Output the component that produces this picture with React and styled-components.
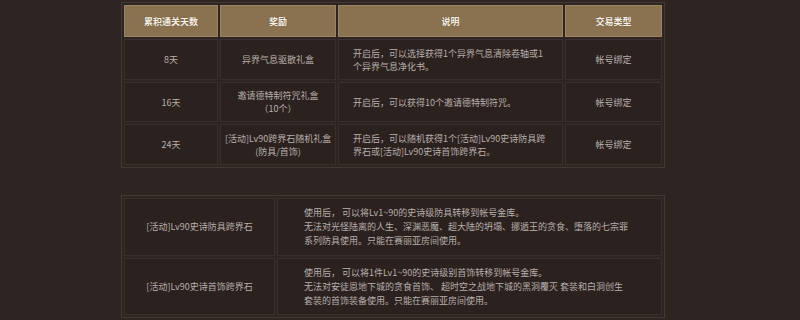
import React from 'react';
import styled, { createGlobalStyle } from 'styled-components';

const GlobalStyle = createGlobalStyle`
	html, body {
		margin: 0;
		background: #2e2422;
	}
	body {
		font-family: "Noto Sans CJK SC", "Noto Sans", sans-serif;
	}
`;

const rewards = [
	{
		days: '8天',
		reward: ['异界气息驱散礼盒'],
		desc: ['开启后，可以选择获得1个异界气息清除卷轴或1', '个异界气息净化书。'],
		trade: '帐号绑定',
		height: 41,
	},
	{
		days: '16天',
		reward: ['邀请德特制符咒礼盒', '（10个）'],
		desc: ['开启后，可以获得10个邀请德特制符咒。'],
		trade: '帐号绑定',
		height: 40,
	},
	{
		days: '24天',
		reward: ['[活动]Lv90跨界石随机礼盒', '(防具/首饰)'],
		desc: ['开启后，可以随机获得1个[活动]Lv90史诗防具跨', '界石或[活动]Lv90史诗首饰跨界石。'],
		trade: '帐号绑定',
		height: 41,
	},
];

const stones = [
	{
		name: '[活动]Lv90史诗防具跨界石',
		lines: [
			'使用后， 可以将Lv1~90的史诗级防具转移到帐号金库。',
			'无法对光怪陆离的人生、深渊恶魔、超大陆的坍塌、挪遁王的贪食、堕落的七宗罪',
			'系列防具使用。只能在赛丽亚房间使用。',
		],
		height: 58,
	},
	{
		name: '[活动]Lv90史诗首饰跨界石',
		lines: [
			'使用后， 可以将1件Lv1~90的史诗级别首饰转移到帐号金库。',
			'无法对安徒恩地下城的贪食首饰、 超时空之战地下城的黑洞覆灭 套装和白洞创生',
			'套装的首饰装备使用。只能在赛丽亚房间使用。',
		],
		height: 57,
	},
];

const Lines = ({ lines }) => lines.map((line, i) => <Line key={i}>{line}</Line>);

export default function App() {
	return (
		<>
			<GlobalStyle />
			<Page>
				<Table>
					<colgroup>
						<col style={{ width: 94 }} />
						<col style={{ width: 116 }} />
						<col style={{ width: 225 }} />
						<col style={{ width: 97 }} />
					</colgroup>
					<thead>
						<tr>
							<HeadCell>累积通关天数</HeadCell>
							<HeadCell>奖励</HeadCell>
							<HeadCell>说明</HeadCell>
							<HeadCell>交易类型</HeadCell>
						</tr>
					</thead>
					<tbody>
						{rewards.map((row) => (
							<tr key={row.days}>
								<Cell $h={row.height}>{row.days}</Cell>
								<Cell $h={row.height}><Lines lines={row.reward} /></Cell>
								<Cell $h={row.height} $align='left' $pad={14}><Lines lines={row.desc} /></Cell>
								<Cell $h={row.height}>{row.trade}</Cell>
							</tr>
						))}
					</tbody>
				</Table>
				<Table $lines={14}>
					<colgroup>
						<col style={{ width: 151 }} />
						<col style={{ width: 385 }} />
					</colgroup>
					<tbody>
						{stones.map((row) => (
							<tr key={row.name}>
								<Cell $h={row.height}>{row.name}</Cell>
								<Cell $h={row.height} $align='left' $pad={26}><Lines lines={row.lines} /></Cell>
							</tr>
						))}
					</tbody>
				</Table>
			</Page>
		</>
	);
}

const Page = styled.div`
	width: 800px;
	height: 320px;
	overflow: hidden;
	box-sizing: border-box;
	padding: 2px 0 0 121px;
	display: flex;
	flex-direction: column;
	gap: 27px;
`;

const Table = styled.table`
	width: 544px;
	table-layout: fixed;
	border-collapse: separate;
	border-spacing: 2px;
	border: 1px solid #443834;
	font-size: 9px;
	line-height: ${(p) => p.$lines || 13}px;
	color: #b8b0ab;
`;

const HeadCell = styled.th`
	height: 32px;
	padding: 0;
	box-sizing: border-box;
	background: #8a7250;
	border: 1px solid #9c8563;
	color: #f6f0e6;
	font-weight: bold;
	text-align: center;
	text-shadow: 0 0 1px rgba(60, 40, 20, 0.6);
`;

const Cell = styled.td`
	height: ${(p) => p.$h}px;
	box-sizing: border-box;
	padding: 0 4px 0 ${(p) => p.$pad || 4}px;
	border: 1px solid #3a2f2c;
	background: #2b211f;
	text-align: ${(p) => p.$align || 'center'};
	vertical-align: middle;
`;

const Line = styled.div`
	white-space: nowrap;
`;
